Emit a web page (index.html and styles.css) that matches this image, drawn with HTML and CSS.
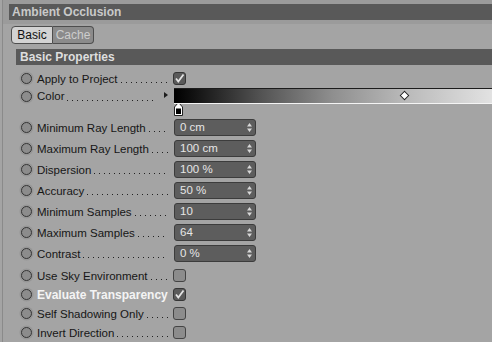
FILE: index.html
```html
<!DOCTYPE html>
<html lang="en">
<head>
    <meta charset="UTF-8">
    <title>Ambient Occlusion</title>
    <link rel="stylesheet" href="styles.css">
</head>
<body>
    <div class="panel">
        <div class="top">
            <div class="title">Ambient Occlusion</div>
        </div>
        <div class="tabs">
            <span class="tab active">Basic</span>
            <span class="tab">Cache</span>
        </div>
        <div class="section">Basic Properties</div>
        <div class="rows">
            <div class="row short">
                <div class="name"><span class="dot"></span><span class="label">Apply to Project</span><span class="leader"></span></div>
                <span class="check on"><svg width="11" height="11" viewBox="0 0 11 11"><path d="M2 5.5 L4.3 8.5 L9.5 1.5" fill="none" stroke="#e4e4e4" stroke-width="1.8"/></svg></span>
            </div>
            <div class="row color-row">
                <div class="name"><span class="dot"></span><span class="label">Color</span><span class="leader"></span><span class="arrow"></span></div>
                <div class="gradient"><span class="diamond"></span></div>
            </div>
            <div class="knot-row">
                <svg class="knot" width="9" height="14" viewBox="0 0 9 14"><path d="M4.5 0.5 L8.5 5 V13.5 H0.5 V5 Z" fill="#fff" stroke="#222"/><rect x="2" y="6.5" width="5" height="5.5" fill="#000"/></svg>
            </div>
            <div class="row">
                <div class="name"><span class="dot"></span><span class="label">Minimum Ray Length</span><span class="leader"></span></div>
                <div class="field">0 cm<svg class="spin" width="5" height="9" viewBox="0 0 5 9"><path d="M2.5 0 L5 3.5 H0 Z M0 5.5 H5 L2.5 9 Z" fill="#d8d8d8"/></svg></div>
            </div>
            <div class="row">
                <div class="name"><span class="dot"></span><span class="label">Maximum Ray Length</span><span class="leader"></span></div>
                <div class="field">100 cm<svg class="spin" width="5" height="9" viewBox="0 0 5 9"><path d="M2.5 0 L5 3.5 H0 Z M0 5.5 H5 L2.5 9 Z" fill="#d8d8d8"/></svg></div>
            </div>
            <div class="row">
                <div class="name"><span class="dot"></span><span class="label">Dispersion</span><span class="leader"></span></div>
                <div class="field">100 %<svg class="spin" width="5" height="9" viewBox="0 0 5 9"><path d="M2.5 0 L5 3.5 H0 Z M0 5.5 H5 L2.5 9 Z" fill="#d8d8d8"/></svg></div>
            </div>
            <div class="row">
                <div class="name"><span class="dot"></span><span class="label">Accuracy</span><span class="leader"></span></div>
                <div class="field">50 %<svg class="spin" width="5" height="9" viewBox="0 0 5 9"><path d="M2.5 0 L5 3.5 H0 Z M0 5.5 H5 L2.5 9 Z" fill="#d8d8d8"/></svg></div>
            </div>
            <div class="row">
                <div class="name"><span class="dot"></span><span class="label">Minimum Samples</span><span class="leader"></span></div>
                <div class="field">10<svg class="spin" width="5" height="9" viewBox="0 0 5 9"><path d="M2.5 0 L5 3.5 H0 Z M0 5.5 H5 L2.5 9 Z" fill="#d8d8d8"/></svg></div>
            </div>
            <div class="row">
                <div class="name"><span class="dot"></span><span class="label">Maximum Samples</span><span class="leader"></span></div>
                <div class="field">64<svg class="spin" width="5" height="9" viewBox="0 0 5 9"><path d="M2.5 0 L5 3.5 H0 Z M0 5.5 H5 L2.5 9 Z" fill="#d8d8d8"/></svg></div>
            </div>
            <div class="row">
                <div class="name"><span class="dot"></span><span class="label">Contrast</span><span class="leader"></span></div>
                <div class="field">0 %<svg class="spin" width="5" height="9" viewBox="0 0 5 9"><path d="M2.5 0 L5 3.5 H0 Z M0 5.5 H5 L2.5 9 Z" fill="#d8d8d8"/></svg></div>
            </div>
            <div class="checks">
                <div class="row short">
                    <div class="name"><span class="dot"></span><span class="label">Use Sky Environment</span><span class="leader"></span></div>
                    <span class="check"></span>
                </div>
                <div class="row short">
                    <div class="name"><span class="dot"></span><span class="label strong">Evaluate Transparency</span></div>
                    <span class="check on"><svg width="11" height="11" viewBox="0 0 11 11"><path d="M2 5.5 L4.3 8.5 L9.5 1.5" fill="none" stroke="#e4e4e4" stroke-width="1.8"/></svg></span>
                </div>
                <div class="row short">
                    <div class="name"><span class="dot"></span><span class="label">Self Shadowing Only</span><span class="leader"></span></div>
                    <span class="check"></span>
                </div>
                <div class="row short">
                    <div class="name"><span class="dot"></span><span class="label">Invert Direction</span><span class="leader"></span></div>
                    <span class="check"></span>
                </div>
            </div>
        </div>
    </div>
</body>
</html>
```

FILE: styles.css
```css
body {
    margin: 0;
    background-color: #a4a4a4;
    font-family: "Liberation Sans", Arial, sans-serif;
    font-size: 11.5px;
    color: #161616;
    overflow: hidden;
}
.panel {
    margin-left: 2px;
    border-left: 1px solid #8a8a8a;
    height: 342px;
}
.top {
    background: #9b9b9b;
    padding: 4px 0 4px 6px;
}
.title {
    background: #595959;
    height: 16px;
    line-height: 16px;
    padding-left: 3px;
    font-size: 12px;
    font-weight: bold;
    color: #c9c9c9;
}
.tabs {
    display: flex;
    margin: 2px 0 0 8px;
}
.tab {
    width: 40px;
    height: 16px;
    line-height: 16px;
    text-align: center;
    font-size: 12px;
    border: 1px solid #4e4e4e;
    background: #8b8b8b;
    color: #cdcdcd;
    border-radius: 0 4px 4px 0;
    border-left: none;
}
.tab.active {
    background: #d3d3d3;
    color: #111;
    border-left: 1px solid #4e4e4e;
    border-radius: 4px 0 0 4px;
}
.section {
    margin: 5px 0 0 13px;
    background: #595959;
    height: 16px;
    line-height: 16px;
    padding-left: 4px;
    font-size: 12px;
    font-weight: bold;
    color: #dedede;
}
.rows {
    margin: 4px 0 0 16px;
}
.row {
    display: flex;
    align-items: center;
    height: 21px;
}
.row.short {
    height: 19px;
}
.checks {
    margin-top: 2px;
}
.name {
    width: 154px;
    display: flex;
    align-items: center;
    flex-shrink: 0;
}
.dot {
    width: 9px;
    height: 9px;
    margin: 2px;
    border: 1.5px solid #353535;
    border-radius: 50%;
    background: #8c8c8c;
    box-shadow: 0 0 0 1.5px #969696;
    flex-shrink: 0;
}
.label {
    margin-left: 3px;
    white-space: nowrap;
}
.label.strong {
    font-weight: bold;
    color: #f4f4f4;
    font-size: 12px;
}
.leader {
    flex: 1;
    height: 1px;
    margin: 8px 5px 0 3px;
    background: repeating-linear-gradient(to right, #222 0 1px, transparent 1px 5px);
}
.check {
    width: 11px;
    height: 11px;
    border: 1px solid #444;
    border-radius: 3px;
    background: #8c8c8c;
    display: flex;
    align-items: center;
    justify-content: center;
}
.check.on {
    background: #5a5a5a;
    border-color: #363636;
}
.color-row {
    height: 16px;
    align-items: flex-start;
}
.color-row .name {
    height: 16px;
}
.color-row .leader {
    margin-right: 9px;
}
.arrow {
    width: 0;
    height: 0;
    border-top: 3px solid transparent;
    border-bottom: 3px solid transparent;
    border-left: 4px solid #1e1e1e;
    margin: -2px 5px 0 0;
}
.gradient {
    position: relative;
    flex: 1;
    margin-left: 1px;
    height: 14px;
    border-top: 1px solid #1c1c1c;
    border-bottom: 1px solid #f4f4f4;
    background: linear-gradient(to right, #000 0%, #111 6%, #555 28%, #8f8f8f 50%, #b8b8b8 72%, #e2e2e2 100%);
}
.diamond {
    position: absolute;
    left: 227px;
    top: 3px;
    width: 5px;
    height: 5px;
    background: #fff;
    border: 1px solid #222;
    transform: rotate(45deg);
}
.knot-row {
    height: 15px;
}
.knot {
    display: block;
    margin: -2px 0 0 155px;
}
.field {
    position: relative;
    width: 75px;
    height: 15px;
    line-height: 15px;
    margin-left: 1px;
    padding-left: 5px;
    border: 1px solid #3c3c3c;
    border-radius: 3px;
    background: #5d5d5d;
    color: #e6e6e6;
}
.spin {
    position: absolute;
    right: 3px;
    top: 3px;
}
```
